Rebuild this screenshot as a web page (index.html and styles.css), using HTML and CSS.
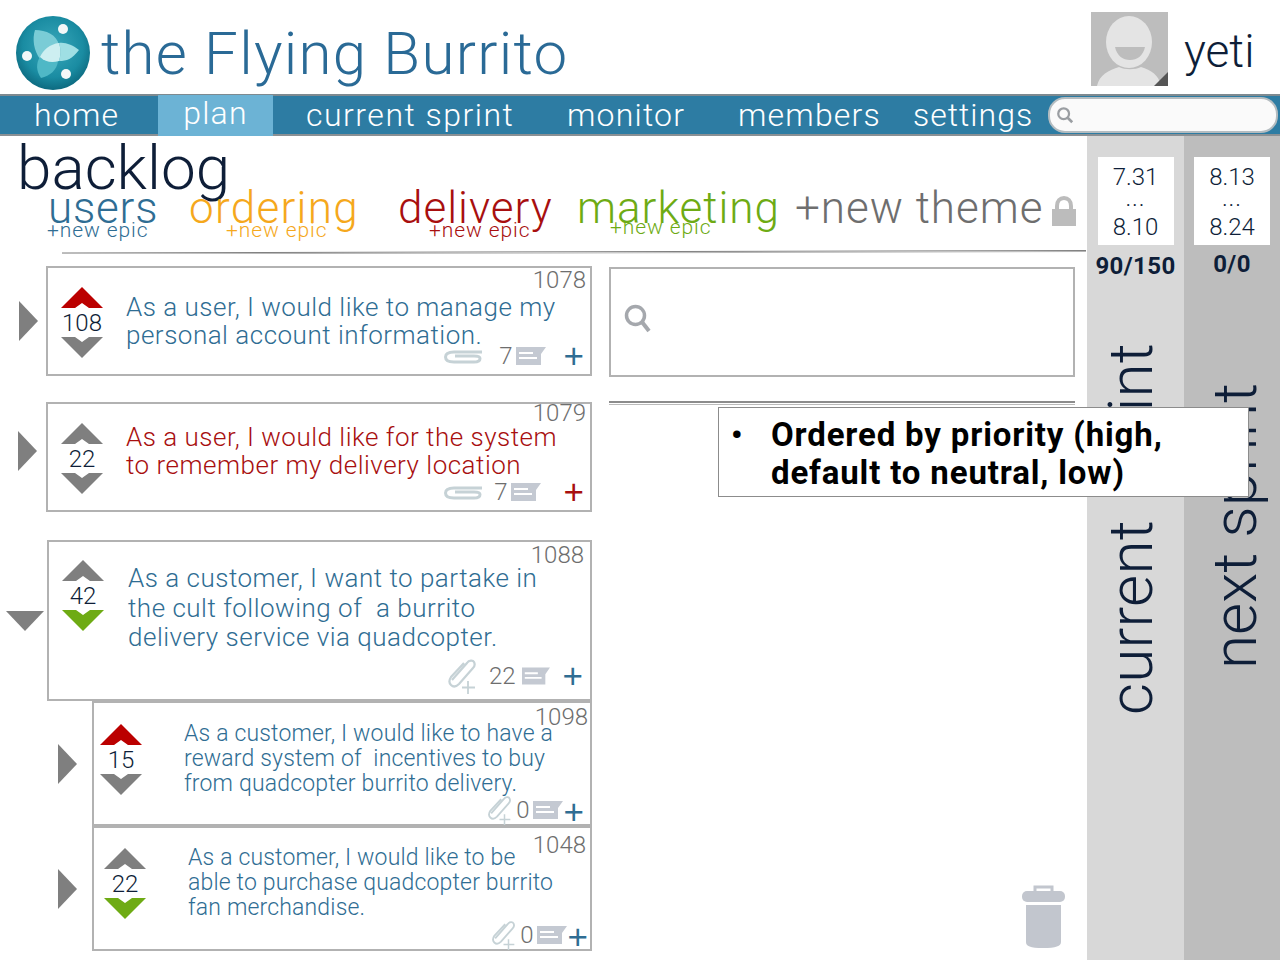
FILE: index.html
```html
<!DOCTYPE html>
<html lang="en">
<head>
    <meta charset="UTF-8">
    <meta name="viewport" content="width=device-width, initial-scale=1.0">
    <title>the Flying Burrito</title>
    <link rel="stylesheet" href="styles.css">
</head>
<body>
    <svg class="sprites" width="0" height="0">
        <symbol id="arrow-up" viewBox="0 0 42 21"><polygon points="0,21 21,0 42,21 28,21 21,16 14,21"/></symbol>
        <symbol id="arrow-down" viewBox="0 0 42 21"><polygon points="0,0 14,0 21,5 28,0 42,0 21,21"/></symbol>
        <symbol id="clip-flat" viewBox="0 0 40 16"><path d="M38 4H10C4 4 1.500 6 1.500 9S4 14 10 14H30C34 14 36 12.500 36 10.500S34 8 30 8H11" fill="none" stroke="#c6d2d6" stroke-width="3"/></symbol>
        <symbol id="clip-add" viewBox="0 0 30 36"><path d="M5 22L20 5C22 2 26 2 27 4S28 8 26 10L12 26C9 29 6 29 4 27S2 22 4 19L17 5" fill="none" stroke="#c6d2d6" stroke-width="2.200"/><path d="M21 23V36M15 29.500H28" fill="none" stroke="#c6d2d6" stroke-width="1.800"/></symbol>
        <symbol id="comment" viewBox="0 0 30 18"><polygon points="0,0 30,0 25,7 25,18 0,18" fill="#c4c9d2"/><path d="M3 6H17M3 11H21" stroke="#fff" stroke-width="2" fill="none"/></symbol>
    </svg>

    <header class="top">
        <div class="brand">
            <svg class="logo" viewBox="0 0 76 76">
                <defs>
                    <radialGradient id="ball" cx="50%" cy="42%" r="58%">
                        <stop offset="0" stop-color="#3aa8bb"/>
                        <stop offset="0.7" stop-color="#1a8ca2"/>
                        <stop offset="1" stop-color="#0d6a80"/>
                    </radialGradient>
                </defs>
                <circle cx="38" cy="38" r="37" fill="url(#ball)"/>
                <path d="M20 15C31 15 42 20 44 30C35 30 29 34 25 44C19 36 17 24 20 15Z" fill="#7accd6"/>
                <path d="M64 35C57 44 52 46 44 46C46 40 46 34 44 28C50 27 58 30 64 35Z" fill="#9fdfe4"/>
                <path d="M26 63C21 56 21 48 25 42C30 46 37 47 43 46C42 55 35 61 26 63Z" fill="#4fb8c6"/>
                <path d="M25 42C28 35 35 29 44 28C46 34 46 40 44 46C37 48 30 47 25 42Z" fill="#cdeff1"/>
                <circle cx="48" cy="14" r="5" fill="#f4f8f8"/>
                <circle cx="12" cy="41" r="5" fill="#f4f8f8"/>
                <circle cx="51" cy="59" r="5" fill="#f4f8f8"/>
            </svg>
            <span class="brand-name">the Flying Burrito</span>
        </div>
        <div class="user">
            <svg class="avatar" viewBox="0 0 77 74">
                <rect width="77" height="74" fill="#bdbdbd"/>
                <ellipse cx="38" cy="30" rx="23" ry="26" fill="#e4e4e4"/>
                <path d="M24 35H54C52 44 46 48 39 48S26 44 24 35Z" fill="#bdbdbd"/>
                <path d="M6 74C8 63 18 58 28 55C34 58 44 58 50 55C60 58 68 63 70 74Z" fill="#e4e4e4"/>
                <polygon points="77,60 77,74 63,74" fill="#555"/>
            </svg>
            <span class="user-name">yeti</span>
        </div>
    </header>

    <nav class="nav">
        <a class="nav-item nav-home" href="#">home</a>
        <a class="nav-item nav-plan active" href="#">plan</a>
        <a class="nav-item nav-current" href="#">current sprint</a>
        <a class="nav-item nav-monitor" href="#">monitor</a>
        <a class="nav-item nav-members" href="#">members</a>
        <a class="nav-item nav-settings" href="#">settings</a>
        <div class="nav-search">
            <svg class="search-icon-small" viewBox="0 0 20 20"><circle cx="8.500" cy="8.500" r="6" fill="none" stroke="#9a9ea2" stroke-width="2.500"/><path d="M13 13L18 18" stroke="#9a9ea2" stroke-width="3"/></svg>
        </div>
    </nav>

    <main class="main">
        <section class="backlog">
            <h1 class="backlog-title">backlog</h1>
            <div class="epics">
                <div class="epic epic-users"><span class="epic-name">users</span><span class="epic-new">+new epic</span></div>
                <div class="epic epic-ordering"><span class="epic-name">ordering</span><span class="epic-new">+new epic</span></div>
                <div class="epic epic-delivery"><span class="epic-name">delivery</span><span class="epic-new">+new epic</span></div>
                <div class="epic epic-marketing"><span class="epic-name">marketing</span><span class="epic-new">+new epic</span></div>
                <span class="new-theme">+new theme</span>
                <svg class="lock" viewBox="0 0 24 30"><path d="M5 14V10C5 5 8 2 12 2S19 5 19 10V14" fill="none" stroke="#bcbcbc" stroke-width="4"/><rect y="13" width="24" height="17" fill="#bcbcbc"/></svg>
            </div>
            <svg class="rule rule-main" viewBox="0 0 1024 4" preserveAspectRatio="none"><path d="M0 3L1024 0.500" stroke="#808080" fill="none"/><path d="M0 4L500 3L1024 1.500" stroke="#b5b5b5" fill="none"/></svg>

            <div class="board">
                <div class="stories">
                    <div class="row row-gap1">
                        <div class="expand"><span class="tri-right"></span></div>
                        <article class="card card-a">
                            <span class="card-id">1078</span>
                            <div class="vote">
                                <svg class="vote-arrow red"><use href="#arrow-up"/></svg>
                                <span class="vote-num">108</span>
                                <svg class="vote-arrow"><use href="#arrow-down"/></svg>
                            </div>
                            <div class="card-body">
                                <p class="story">As a user, I would like to manage my<br>personal account information.</p>
                                <div class="card-foot foot-a">
                                    <svg class="clip-flat"><use href="#clip-flat"/></svg>
                                    <span class="count count-7a">7</span>
                                    <svg class="comment"><use href="#comment"/></svg>
                                    <span class="plus">+</span>
                                </div>
                            </div>
                        </article>
                    </div>
                    <div class="row row-gap2">
                        <div class="expand expand-b"><span class="tri-right"></span></div>
                        <article class="card card-b">
                            <span class="card-id id-b">1079</span>
                            <div class="vote">
                                <svg class="vote-arrow"><use href="#arrow-up"/></svg>
                                <span class="vote-num">22</span>
                                <svg class="vote-arrow"><use href="#arrow-down"/></svg>
                            </div>
                            <div class="card-body">
                                <p class="story story-red">As a user, I would like for the system<br>to remember my delivery location</p>
                                <div class="card-foot foot-b">
                                    <svg class="clip-flat"><use href="#clip-flat"/></svg>
                                    <span class="count count-7b">7</span>
                                    <svg class="comment"><use href="#comment"/></svg>
                                    <span class="plus plus-red plus-b">+</span>
                                </div>
                            </div>
                        </article>
                    </div>
                    <div class="row">
                        <div class="expand expand-open"><span class="tri-down"></span></div>
                        <article class="card card-c">
                            <span class="card-id">1088</span>
                            <div class="vote">
                                <svg class="vote-arrow"><use href="#arrow-up"/></svg>
                                <span class="vote-num">42</span>
                                <svg class="vote-arrow green"><use href="#arrow-down"/></svg>
                            </div>
                            <div class="card-body">
                                <p class="story story-c">As a customer, I want to partake in<br>the cult following of&nbsp; a burrito<br>delivery service via quadcopter.</p>
                                <div class="card-foot foot-c">
                                    <svg class="clip-add"><use href="#clip-add"/></svg>
                                    <span class="count">22</span>
                                    <svg class="comment comment-c"><use href="#comment"/></svg>
                                    <span class="plus plus-c">+</span>
                                </div>
                            </div>
                        </article>
                    </div>
                    <div class="row row-sub">
                        <div class="expand expand-sub"><span class="tri-right"></span></div>
                        <article class="card card-d">
                            <span class="card-id">1098</span>
                            <div class="vote">
                                <svg class="vote-arrow red"><use href="#arrow-up"/></svg>
                                <span class="vote-num">15</span>
                                <svg class="vote-arrow"><use href="#arrow-down"/></svg>
                            </div>
                            <div class="card-body">
                                <p class="story story-sub">As a customer, I would like to have a<br>reward system of&nbsp; incentives to buy<br>from quadcopter burrito delivery.</p>
                                <div class="card-foot foot-d">
                                    <svg class="clip-add clip-small"><use href="#clip-add"/></svg>
                                    <span class="count">0</span>
                                    <svg class="comment"><use href="#comment"/></svg>
                                    <span class="plus plus-low">+</span>
                                </div>
                            </div>
                        </article>
                    </div>
                    <div class="row row-sub">
                        <div class="expand expand-sub"><span class="tri-right"></span></div>
                        <article class="card card-e">
                            <span class="card-id">1048</span>
                            <div class="vote">
                                <svg class="vote-arrow"><use href="#arrow-up"/></svg>
                                <span class="vote-num">22</span>
                                <svg class="vote-arrow green"><use href="#arrow-down"/></svg>
                            </div>
                            <div class="card-body">
                                <p class="story story-sub">As a customer, I would like to be<br>able to purchase quadcopter burrito<br>fan merchandise.</p>
                                <div class="card-foot foot-e">
                                    <svg class="clip-add clip-small"><use href="#clip-add"/></svg>
                                    <span class="count">0</span>
                                    <svg class="comment"><use href="#comment"/></svg>
                                    <span class="plus plus-low">+</span>
                                </div>
                            </div>
                        </article>
                    </div>
                </div>

                <div class="finder">
                    <div class="finder-box">
                        <svg class="search-icon" viewBox="0 0 28 30"><circle cx="11.500" cy="11.500" r="9" fill="none" stroke="#a5a8ad" stroke-width="3.500"/><path d="M18 18L25 27" stroke="#a5a8ad" stroke-width="4"/></svg>
                    </div>
                    <div class="finder-rule"></div>
                    <div class="trash-wrap">
                        <svg class="trash" viewBox="0 0 43 63">
                            <path d="M13 8V2H30V8" fill="none" stroke="#c2c6ce" stroke-width="3"/>
                            <rect y="6" width="43" height="11" rx="5" fill="#c2c6ce"/>
                            <path d="M4 20H39V57C39 61 34 63 21 63S4 61 4 57Z" fill="#c2c6ce"/>
                        </svg>
                    </div>
                </div>
            </div>
        </section>

        <aside class="sprint sprint-current">
            <div class="dates"><span>7.31</span><span class="dots">...</span><span>8.10</span></div>
            <div class="points">90/150</div>
            <div class="sprint-label">current sprint</div>
        </aside>
        <aside class="sprint sprint-next">
            <div class="dates"><span>8.13</span><span class="dots">...</span><span>8.24</span></div>
            <div class="points points-next">0/0</div>
            <div class="sprint-label label-next">next sprint</div>
        </aside>

        <div class="note">
            <ul class="note-list">
                <li>Ordered by priority (high,<br>default to neutral, low)</li>
            </ul>
        </div>
    </main>
</body>
</html>
```

FILE: styles.css
```css
* {
    box-sizing: border-box;
}

html,
body {
    margin: 0;
    height: 960px;
    overflow: hidden;
    background: #fff;
}

body {
    font-family: "Roboto", "Liberation Sans", sans-serif;
    font-weight: 300;
    color: #0e1e38;
}

.sprites {
    position: absolute;
}

/* header */
.top {
    height: 94px;
    display: flex;
    justify-content: space-between;
}

.brand {
    display: flex;
    align-items: flex-start;
    padding: 15px 0 0 15px;
}

.logo {
    width: 76px;
    height: 76px;
}

.brand-name {
    margin-left: 10px;
    font-size: 60px;
    line-height: 78px;
    color: #2a6a96;
    letter-spacing: 1.3px;
}

.user {
    display: flex;
    align-items: flex-start;
    padding-top: 12px;
}

.avatar {
    width: 77px;
    height: 74px;
}

.user-name {
    width: 96px;
    margin-left: 16px;
    font-size: 46px;
    line-height: 78px;
}

/* nav */
.nav {
    height: 42px;
    display: flex;
    align-items: stretch;
    background: #2d7ca3;
    border-top: 2px solid #7e8a90;
    border-bottom: 2px solid #8a9094;
}

.nav-item {
    color: #fff;
    text-decoration: none;
    font-size: 32px;
    line-height: 38px;
    letter-spacing: 1.2px;
}

.nav-home { width: 158px; padding-left: 34px; }
.nav-current { width: 261px; margin-left: 33px; letter-spacing: 1.5px; }
.nav-monitor { width: 171px; }
.nav-members { width: 175px; }
.nav-settings { width: 135px; letter-spacing: 1px; }

.nav-plan {
    margin: -1px 0 -2px;
    width: 115px;
    text-align: center;
    background: #6cb3d5;
    line-height: 36px;
}

.nav-search {
    width: 230px;
    margin: 1px 0 1px;
    display: flex;
    align-items: center;
    padding-left: 6px;
    background: #fafafa;
    border: 2px solid #b4bcc0;
    border-radius: 17px;
}

.search-icon-small {
    width: 18px;
    height: 18px;
}

/* main */
.main {
    position: relative;
    height: 824px;
    display: flex;
}

.backlog {
    width: 1087px;
}

.backlog-title {
    margin: 0;
    padding-left: 17px;
    font-size: 62px;
    font-weight: 300;
    line-height: 64px;
}

.epics {
    display: flex;
    align-items: flex-start;
    margin-top: -16px;
    padding-left: 47px;
}

.epic {
    display: flex;
    flex-direction: column;
}

.epic-name {
    font-size: 44px;
    line-height: 48px;
    letter-spacing: 1px;
}

.epic-new {
    margin-top: -12px;
    font-size: 21px;
    line-height: 20px;
    white-space: nowrap;
    letter-spacing: 0.9px;
}

.epic-users { color: #2f6d93; width: 142px; }
.epic-users .epic-name { margin-left: 1px; letter-spacing: 0.8px; }
.epic-ordering { color: #f5a81c; width: 209px; }
.epic-ordering .epic-name { letter-spacing: 1.3px; }
.epic-ordering .epic-new { margin-left: 37px; }
.epic-delivery { color: #a80f0f; width: 179px; }
.epic-delivery .epic-new { margin-left: 31px; }
.epic-marketing { color: #6eab14; width: 218px; }
.epic-marketing .epic-new { margin: -15px 0 0 33px; }

.new-theme {
    font-size: 44px;
    line-height: 48px;
    color: #6e6e6e;
    white-space: nowrap;
    letter-spacing: 1px;
}

.lock {
    width: 24px;
    height: 30px;
    margin: 12px 0 0 8px;
}

.rule {
    display: block;
}

.rule-main {
    width: 1024px;
    height: 4px;
    margin: 10px 0 0 62px;
}

.board {
    display: flex;
    margin-top: 12px;
}

.stories {
    width: 592px;
}

.row {
    display: flex;
    align-items: stretch;
}

.row-gap1 { margin-bottom: 26px; }
.row-gap2 { margin-bottom: 28px; }

.expand {
    width: 46px;
    display: flex;
    align-items: center;
    padding-left: 19px;
}

.expand-b { padding: 0 0 12px 18px; }
.expand-open { width: 47px; padding: 0 0 0 6px; }
.expand-sub { width: 92px; padding-left: 58px; }

.tri-right {
    width: 0;
    height: 0;
    border-left: 19px solid #7f7f7f;
    border-top: 20px solid transparent;
    border-bottom: 20px solid transparent;
}

.tri-down {
    width: 0;
    height: 0;
    border-top: 20px solid #7f7f7f;
    border-left: 19px solid transparent;
    border-right: 19px solid transparent;
}

/* cards */
.card {
    position: relative;
    flex: 1;
    display: flex;
    background: #fff;
    border: 2px solid #b2b2b2;
}

.card-a { height: 110px; padding: 19px 0 0 13px; }
.card-b { height: 110px; padding: 19px 0 0 13px; }
.card-c { height: 161px; padding: 18px 0 0 13px; }
.card-d { height: 125px; padding: 21px 0 0 6px; }
.card-e { height: 125px; padding: 20px 0 0 10px; }

.card-id {
    position: absolute;
    top: -1px;
    right: 4px;
    font-size: 24px;
    line-height: 26px;
    color: #6e6e6e;
}

.id-b { top: -4px; }
.card-c .card-id { top: 0; right: 6px; }
.card-d .card-id { top: 1px; right: 2px; }
.card-e .card-id { top: 4px; right: 4px; }

.vote {
    width: 42px;
    flex-shrink: 0;
    display: flex;
    flex-direction: column;
    align-items: center;
}

.vote-arrow {
    display: block;
    width: 42px;
    height: 21px;
    flex-shrink: 0;
    fill: #7f7f7f;
}

.vote-arrow.red { fill: #bb0000; }
.vote-arrow.green { fill: #6eab14; }

.vote-num {
    height: 29px;
    font-size: 24px;
    line-height: 30px;
}

.card-body {
    flex: 1;
    min-width: 0;
    display: flex;
    flex-direction: column;
    padding-left: 23px;
}

.card-c .card-body { padding-left: 24px; }
.card-d .card-body { padding-left: 42px; }
.card-e .card-body { padding-left: 42px; }

.story {
    margin: 6px 0 0;
    font-size: 26px;
    line-height: 28px;
    color: #2f6d93;
    white-space: nowrap;
    letter-spacing: 0.5px;
}

.story-red { color: #a80f0f; margin-top: 0; }
.story-c { margin-top: 4px; line-height: 29.5px; }
.story-sub { margin-top: -3px; font-size: 23px; line-height: 25px; letter-spacing: 0.17px; }

.card-foot {
    position: absolute;
    right: 6px;
    display: flex;
    align-items: center;
}

.foot-a { bottom: 3px; }
.foot-b { bottom: 3px; }
.foot-c { bottom: 5px; right: 7px; }
.foot-d { bottom: -3px; }
.foot-e { bottom: -3px; right: 2px; }

.clip-flat {
    width: 40px;
    height: 16px;
}

.clip-add {
    width: 30px;
    height: 36px;
    margin-right: 12px;
}

.clip-small {
    width: 27px;
    height: 30px;
    margin-right: 3px;
}

.count {
    font-size: 24px;
    color: #6e6e6e;
}

.count-7a { margin-left: 15px; }
.count-7b { margin-left: 10px; }

.comment {
    width: 30px;
    height: 18px;
    margin-left: 3px;
}

.comment-c {
    width: 28px;
    margin-left: 6px;
}

.plus {
    margin-left: 18px;
    font-size: 35px;
    line-height: 30px;
    color: #2f6d93;
    font-family: "Liberation Sans", sans-serif;
}

.plus-red { color: #a80f0f; }
.plus-b { margin-left: 23px; }
.plus-c { margin-left: 13px; }
.plus-low { margin: 5px 0 0 1px; }

/* search panel */
.finder {
    width: 466px;
    margin-left: 17px;
    display: flex;
    flex-direction: column;
}

.finder-box {
    height: 110px;
    margin-top: 1px;
    display: flex;
    align-items: center;
    padding: 0 0 6px 13px;
    border: 2px solid #b2b2b2;
}

.search-icon {
    width: 28px;
    height: 30px;
}

.finder-rule {
    height: 4px;
    margin-top: 24px;
    border-top: 2px solid #8c8c8c;
    border-bottom: 1px solid #bbb;
}

.trash-wrap {
    margin-top: 480px;
    padding-left: 413px;
}

.trash {
    display: block;
    width: 43px;
    height: 63px;
}

/* sprint columns */
.sprint {
    width: 97px;
    display: flex;
    flex-direction: column;
    align-items: center;
    padding-top: 21px;
}

.sprint-current { background: #d8d8d8; }
.sprint-next { width: 96px; background: #bdbdbd; }

.dates {
    width: 76px;
    height: 88px;
    display: flex;
    flex-direction: column;
    align-items: center;
    padding-top: 6px;
    background: #fff;
    font-size: 24px;
    line-height: 28px;
}

.dates .dots {
    height: 22px;
    line-height: 14px;
    letter-spacing: 1px;
}

.points {
    margin-top: 7px;
    font-size: 24px;
    font-weight: 700;
    line-height: 28px;
    letter-spacing: 0.4px;
}

.points-next { margin-top: 5px; }

.sprint-label {
    margin: 63px 10px 0 0;
    writing-mode: vertical-rl;
    transform: rotate(180deg);
    font-size: 62px;
    line-height: 62px;
    white-space: nowrap;
    word-spacing: 6px;
    letter-spacing: 0.2px;
}

.label-next {
    margin: 105px 0 0 6px;
    word-spacing: 0;
    letter-spacing: 0;
}

/* note over the columns */
.note {
    position: absolute;
    left: 718px;
    top: 271px;
    width: 531px;
    height: 90px;
    background: #fff;
    border: 1px solid #8c8c8c;
}

.note-list {
    margin: 0;
    padding: 8px 0 0 12px;
    list-style: none;
    font-size: 33px;
    font-weight: 700;
    line-height: 38px;
    letter-spacing: 0.85px;
    color: #000;
}

.note-list li {
    display: flex;
}

.note-list li::before {
    content: "\2022";
    flex: 0 0 40px;
    font-size: 32px;
}
```
